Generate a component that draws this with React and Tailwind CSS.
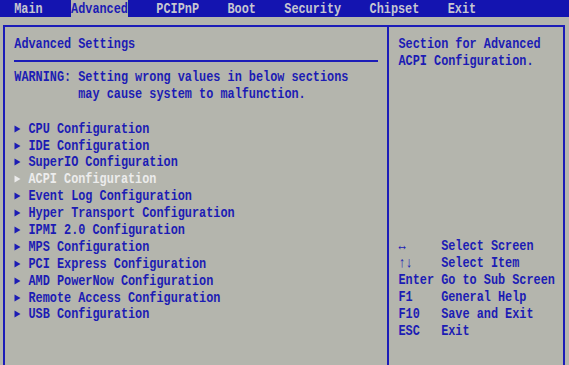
import React from "react";

const items = [
  "CPU Configuration",
  "IDE Configuration",
  "SuperIO Configuration",
  "ACPI Configuration",
  "Event Log Configuration",
  "Hyper Transport Configuration",
  "IPMI 2.0 Configuration",
  "MPS Configuration",
  "PCI Express Configuration",
  "AMD PowerNow Configuration",
  "Remote Access Configuration",
  "USB Configuration",
];

const keys = [
  ["↔", "Select Screen"],
  ["↑↓", "Select Item"],
  ["Enter", "Go to Sub Screen"],
  ["F1", "General Help"],
  ["F10", "Save and Exit"],
  ["ESC", "Exit"],
];

const menu = ["Main", "Advanced", "PCIPnP", "Boot", "Security", "Chipset", "Exit"];

function T({ children, className = "" }) {
  return (
    <span className={"inline-block whitespace-pre leading-[12px] scale-y-[1.24] " + className}>
      {children}
    </span>
  );
}

function R({ children, className = "" }) {
  return <div className={"flex items-center h-[16.9px] " + className}>{children}</div>;
}

function Tri({ color }) {
  return (
    <svg width="7" height="8" viewBox="0 0 7 8" className="block">
      <polygon points="0.5,0.5 6.5,4 0.5,7.5" fill={color} />
    </svg>
  );
}

export default function App() {
  return (
    <div className="w-[569px] h-[365px] overflow-hidden bg-[#b4b5ad] font-['Liberation_Mono',monospace] font-bold text-[11.85px] leading-[16.9px] text-[#1c1cb4]">
      <div className="h-[17px] bg-[#1414b0] flex pl-[2ch] gap-[4ch] text-[#c6c6d0]">
        {menu.map((m) => (
          <div
            key={m}
            className={
              "h-[17px] flex items-center " +
              (m === "Advanced" ? "bg-[#b4b5ad] text-[#1c1cb4]" : "")
            }
          >
            <T>{m}</T>
          </div>
        ))}
      </div>

      <div className="mt-[8px] ml-[3px] w-[562px] h-[400px] border-2 border-b-0 border-[#1c1cb8] flex">
        <div className="w-[384px] border-r-2 border-[#1c1cb8] pl-[9.3px] pr-[9.5px] pt-[8.2px]">
          <R><T>Advanced Settings</T></R>
          <R>
            <div className="h-[2px] w-full bg-[#1c1cb8]" />
          </R>
          <R><T>WARNING: Setting wrong values in below sections</T></R>
          <R><T>{"         may cause system to malfunction."}</T></R>
          <div className="h-[17.5px]" />
          {items.map((it) => {
            const sel = it === "ACPI Configuration";
            return (
              <R key={it}>
                <div className="w-[2ch] flex items-center">
                  <Tri color={sel ? "#ececec" : "#1c1cb4"} />
                </div>
                <T className={sel ? "text-[#ececec]" : ""}>{it}</T>
              </R>
            );
          })}
        </div>

        <div className="flex-1 pl-[9.5px] pt-[8.2px]">
          <R><T>Section for Advanced</T></R>
          <R><T>ACPI Configuration.</T></R>
          <div className="mt-[169px] grid grid-cols-[6ch_1fr]">
            {keys.map(([k, d]) => (
              <React.Fragment key={k}>
                <R><T>{k}</T></R>
                <R><T>{d}</T></R>
              </React.Fragment>
            ))}
          </div>
        </div>
      </div>
    </div>
  );
}
